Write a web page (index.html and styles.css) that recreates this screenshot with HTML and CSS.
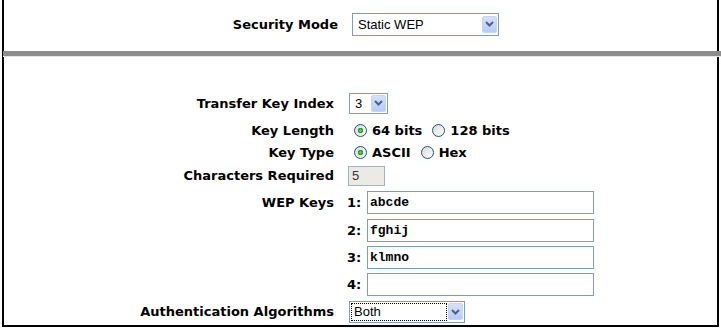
FILE: index.html
```html
<!DOCTYPE html>
<html lang="en">
<head>
    <meta charset="UTF-8">
    <title>Wireless Security</title>
    <link rel="stylesheet" href="styles.css">
</head>
<body>

<div class="frame">
    <div class="mode-row">
        <div class="label">Security Mode</div>
        <div class="select mode-select">
            <span class="value">Static WEP</span>
            <span class="arrow"><svg width="9" height="6" viewBox="0 0 9 6"><path d="M1 1 L4.5 4.5 L8 1" fill="none" stroke="#4d6185" stroke-width="2"/></svg></span>
        </div>
    </div>

    <div class="rule"></div>

    <div class="form">
        <div class="label">Transfer Key Index</div>
        <div class="ctrl">
            <div class="select index-select">
                <span class="value">3</span>
                <span class="arrow"><svg width="9" height="6" viewBox="0 0 9 6"><path d="M1 1 L4.5 4.5 L8 1" fill="none" stroke="#4d6185" stroke-width="2"/></svg></span>
            </div>
        </div>

        <div class="label">Key Length</div>
        <div class="ctrl radios">
            <label><input type="radio" name="len" checked>64 bits</label>
            <label><input type="radio" name="len">128 bits</label>
        </div>

        <div class="label">Key Type</div>
        <div class="ctrl radios">
            <label><input type="radio" name="type" checked>ASCII</label>
            <label><input type="radio" name="type">Hex</label>
        </div>

        <div class="label">Characters Required</div>
        <div class="ctrl">
            <input class="chars" type="text" value="5" disabled>
        </div>

        <div class="label">WEP Keys</div>
        <div class="ctrl key"><b>1:</b><input class="wep" type="text" value="abcde"></div>
        <div></div>
        <div class="ctrl key"><b>2:</b><input class="wep" type="text" value="fghij"></div>
        <div></div>
        <div class="ctrl key"><b>3:</b><input class="wep" type="text" value="klmno"></div>
        <div></div>
        <div class="ctrl key"><b>4:</b><input class="wep" type="text" value=""></div>

        <div class="label">Authentication Algorithms</div>
        <div class="ctrl">
            <div class="select auth-select">
                <span class="value focus">Both</span>
                <span class="arrow"><svg width="9" height="6" viewBox="0 0 9 6"><path d="M1 1 L4.5 4.5 L8 1" fill="none" stroke="#4d6185" stroke-width="2"/></svg></span>
            </div>
        </div>
    </div>
</div>

</body>
</html>
```

FILE: styles.css
```css
*{
    margin: 0;
    padding: 0;
    box-sizing: border-box;
}

body{
    background-color: #fff;
    font-family: "DejaVu Sans", Verdana, sans-serif;
    color: #000;
}

.frame{
    margin-left: 2px;
    width: 717px;
    border: 2px solid #000;
    border-top: 0;
}

.label{
    text-align: right;
    font-size: 13px;
    font-weight: bold;
}

.mode-row{
    display: grid;
    grid-template-columns: 334px auto;
    column-gap: 14px;
    align-items: center;
    justify-content: start;
    height: 51px;
    padding-bottom: 3px;
}

.rule{
    height: 6px;
    margin-left: -1px;
    margin-right: -4px;
    border-top: 5px solid #8c8c8c;
    border-bottom: 1px solid #e4e4e4;
}

.form{
    display: grid;
    grid-template-columns: 330px 1fr;
    grid-template-rows: 30px 24px 21px 25px 29px 27px 27px 27px 27px;
    column-gap: 14px;
    align-items: center;
    padding-top: 31px;
}

.ctrl{
    display: flex;
    align-items: center;
}

/* fake xp style dropdowns */
.select{
    display: flex;
    align-items: center;
    border: 1px solid #7f9db9;
    background-color: #fff;
}

.select .value{
    flex: 1;
    padding-left: 5px;
    font-family: "Liberation Sans", Arial, sans-serif;
    font-size: 13px;
    line-height: 15px;
}

.select .arrow{
    display: flex;
    align-items: center;
    justify-content: center;
    width: 15px;
    height: 17px;
    margin-right: 1px;
    background: linear-gradient(#d4e1fc, #b6cbf6);
    border: 1px solid #c3d4fb;
    border-radius: 2px;
}

.mode-select{
    width: 147px;
    height: 23px;
}

.index-select{
    width: 39px;
    height: 21px;
    margin-left: 1px;
}

.auth-select{
    width: 116px;
    height: 22px;
    margin-left: 1px;
}

.auth-select .value.focus{
    margin: 2px 2px 2px 2px;
    padding-left: 2px;
    height: 16px;
    outline: 1px dotted #000;
    outline-offset: 0;
}

.radios label{
    display: inline-flex;
    align-items: center;
    font-size: 13px;
    font-weight: bold;
}

.radios label + label{
    margin-left: 4px;
}

.radios input{
    appearance: none;
    width: 13px;
    height: 13px;
    margin: 0 5px 0 6px;
    border: 1px solid #1c5180;
    border-radius: 50%;
    background: linear-gradient(135deg, #d8d8d2, #fff);
}

.radios input:checked{
    background: radial-gradient(circle, #63c963 0 1px, #21a121 1.5px 2.5px, transparent 3px), linear-gradient(135deg, #d8d8d2, #fff);
}

.chars{
    width: 37px;
    height: 20px;
    padding-left: 3px;
    border: 1px solid #9fb2c7;
    background-color: #ebebe4;
    color: #333;
    font-family: "Liberation Sans", Arial, sans-serif;
    font-size: 13px;
}

.key b{
    width: 20px;
    margin-left: -1px;
    font-size: 13px;
}

.wep{
    width: 227px;
    height: 23px;
    padding: 0 2px;
    border: 1px solid #7f9db9;
    font-family: "Liberation Mono", "Courier New", monospace;
    font-weight: bold;
    font-size: 13px;
    color: #000;
}
```
